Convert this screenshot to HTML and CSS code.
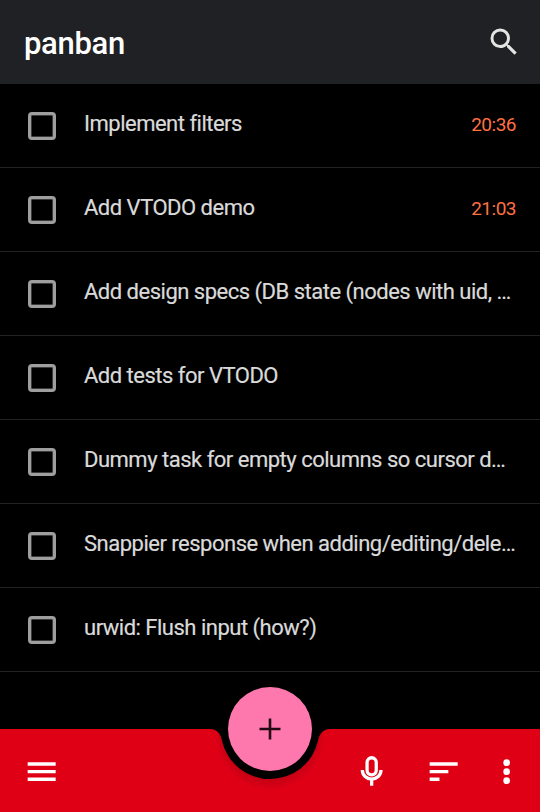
FILE: index.html
```html
<!DOCTYPE html>
<html lang="en">
<head>
<meta charset="utf-8">
<title>panban</title>
<link rel="stylesheet" href="styles.css">
</head>
<body>
<div class="app">
<header class="header">
<h1 class="title">panban</h1>
<svg class="search" viewBox="0 0 24 24"><path d="M15.5 14h-.79l-.28-.27A6.471 6.471 0 0 0 16 9.5 6.5 6.5 0 1 0 9.5 16c1.61 0 3.09-.59 4.23-1.57l.27.28v.79l5 4.99L20.49 19l-4.99-5zm-6 0C7.01 14 5 11.99 5 9.5S7.01 5 9.5 5 14 7.01 14 9.5 11.99 14 9.5 14z"/></svg>
</header>
<main class="list">
<div class="row"><span class="box"></span><span class="task">Implement filters</span><span class="time">20:36</span></div>
<div class="row"><span class="box"></span><span class="task">Add VTODO demo</span><span class="time">21:03</span></div>
<div class="row"><span class="box"></span><span class="task">Add design specs (DB state (nodes with uid, …</span></div>
<div class="row"><span class="box"></span><span class="task">Add tests for VTODO</span></div>
<div class="row"><span class="box"></span><span class="task">Dummy task for empty columns so cursor d…</span></div>
<div class="row"><span class="box"></span><span class="task">Snappier response when adding/editing/dele…</span></div>
<div class="row"><span class="box"></span><span class="task">urwid: Flush input (how?)</span></div>
</main>
<footer class="bar">
<svg class="bar-shape" viewBox="0 0 540 83">
<defs>
<radialGradient id="shade" gradientUnits="userSpaceOnUse" cx="270" cy="6" r="56"><stop offset=".76" stop-color="#000" stop-opacity=".14"/><stop offset="1" stop-color="#000" stop-opacity="0"/></radialGradient>
<clipPath id="surface"><path d="M0 0H210C217 0 221 5 222 12A49.300 49.300 0 0 0 318 12C319 5 323 0 330 0H540V83H0Z"/></clipPath>
</defs>
<g clip-path="url(#surface)"><path fill="#e00016" d="M0 0H540V83H0Z"/><circle cx="270" cy="6" r="56" fill="url(#shade)"/></g>
</svg>
<svg class="icon" viewBox="0 0 24 24"><path d="M3 18h18v-2.200H3zM3 13.100h18v-2.200H3zM3 6v2.200h18V6z"/></svg>
<div class="actions">
<svg class="icon stroked" viewBox="0 0 24 24"><rect x="9.050" y="3.050" width="5.900" height="11" rx="2.950"/><path d="M6 11c0 3.300 2.700 5.800 6 5.800s6-2.500 6-5.800M12 16.800V21"/></svg>
<svg class="icon" viewBox="0 0 24 24"><path d="M3 18h6.300v-2.200H3zM3 6v2.200h18V6zM3 13.100h12v-2.200H3z"/></svg>
<svg class="icon dots" viewBox="0 0 24 24"><circle cx="12" cy="6.200" r="2.150"/><circle cx="12" cy="12" r="2.150"/><circle cx="12" cy="17.800" r="2.150"/></svg>
</div>
<button class="fab" aria-label="Add"><svg viewBox="0 0 22 22"><path d="M9.700.500h2.600v9.200h9.200v2.600h-9.200v9.200H9.700v-9.200H.500V9.700h9.200z"/></svg></button>
</footer>
</div>
</body>
</html>
```
FILE: styles.css
```css
* { box-sizing: border-box; }
body { margin: 0; background: #000; font-family: Roboto, sans-serif; }
.app { width: 540px; height: 812px; display: flex; flex-direction: column; overflow: hidden; }
.header { height: 84px; flex: none; display: flex; align-items: center; justify-content: space-between; padding: 0 18px 0 24px; background: #202124; }
.title { margin: 4px 0 0; color: #fff; font-size: 31px; font-weight: 500; line-height: 36px; letter-spacing: -.3px; }
.search { width: 36px; height: 36px; fill: #e4e4e4; }
.list { flex: 1; }
.row { height: 84px; display: flex; align-items: center; padding: 0 24px 0 28px; border-bottom: 1px solid #222; }
.box { width: 28px; height: 28px; flex: none; margin-right: 28px; border: 3px solid #9e9e9e; border-radius: 4px; box-shadow: inset 0 0 0 .5px #777; }
.task { flex: 1; color: #dadada; font-size: 22px; line-height: 28px; letter-spacing: -.5px; white-space: nowrap; margin-top: -4px; -webkit-text-stroke: .2px #dadada; }
.time { color: #ff7043; font-size: 19px; line-height: 24px; letter-spacing: -.5px; margin-top: -2px; }
.bar { height: 83px; flex: none; position: relative; display: flex; align-items: center; justify-content: space-between; padding: 2px 14.5px 0 23.3px; }
.bar-shape { position: absolute; inset: 0; width: 540px; height: 83px; }
.icon { position: relative; width: 37.33px; height: 37.33px; fill: #fff; }
.stroked { fill: none; stroke: #fff; stroke-width: 2.1; }
.actions { display: flex; gap: 34.8px; }
.dots { margin-left: -9px; }
.fab { position: absolute; left: 228px; top: -42px; width: 84px; height: 84px; display: grid; place-items: center; padding: 0; border: 0; border-radius: 50%; background: #ff78ad; }
.fab svg { width: 22px; height: 22px; fill: #250713; }
```
